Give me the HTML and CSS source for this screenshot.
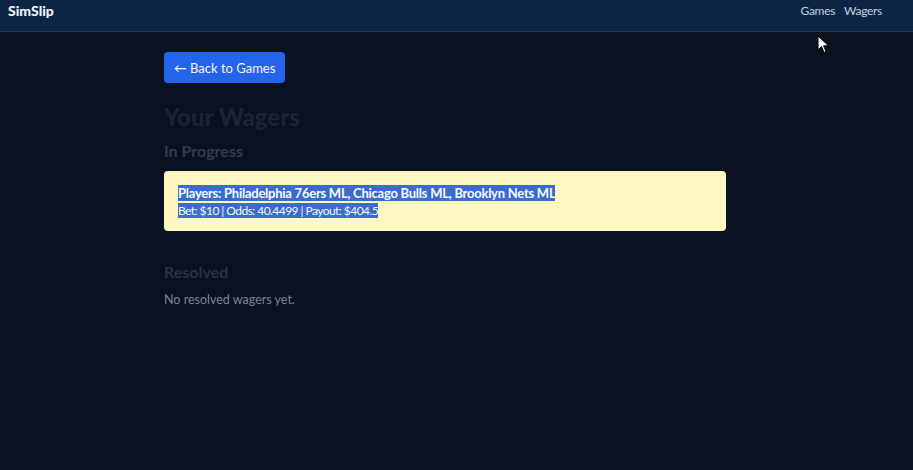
FILE: index.html
```html
<!DOCTYPE html>
<html>
<head>
<meta charset="utf-8">
<link rel="stylesheet" href="styles.css">
</head>
<body>
<header class="nav">
  <div class="brand">SimSlip</div>
  <nav class="links"><a>Games</a><a>Wagers</a></nav>
</header>
<main class="container">
  <button class="back">← Back to Games</button>
  <h1 class="title">Your Wagers</h1>
  <h2 class="section">In Progress</h2>
  <div class="card">
    <div class="line1"><span class="sel">Players: Philadelphia 76ers ML, Chicago Bulls ML, Brooklyn Nets ML</span></div>
    <div class="line2"><span class="sel">Bet: $10 | Odds: 40.4499 | Payout: $404.5</span></div>
  </div>
  <h2 class="section resolved">Resolved</h2>
  <p class="empty">No resolved wagers yet.</p>
</main>
<svg class="cursor" width="14" height="20" viewBox="0 0 14 20"><path d="M1 1 L1 15 L4.5 11.5 L7 17.5 L9 16.6 L6.6 10.8 L11.5 10.8 Z" fill="#fff" stroke="#000" stroke-width="1"/></svg>
</body>
</html>
```
FILE: styles.css
```css
html, body {
  margin: 0;
  padding: 0;
  background: #0a1120;
  font-family: Lato, "Open Sans", sans-serif;
  height: 100%;
}
.nav {
  height: 31px;
  background: #0c2545;
  border-bottom: 1px solid #1c3a5e;
  display: flex;
  align-items: center;
  justify-content: space-between;
  padding: 0 31px 0 8px;
}
.brand {
  color: #eef3f8;
  font-weight: 900;
  font-size: 14px;
  margin-top: -10px;
}
.links {
  display: flex;
  gap: 9px;
  margin-top: -10px;
}
.links a {
  color: #c6d0dc;
  font-size: 12px;
  letter-spacing: -0.3px;
}
.container {
  width: 562px;
  margin-left: 164px;
  padding-top: 20px;
}
.back {
  background: #2563eb;
  color: #f4f7ff;
  border: none;
  border-radius: 4px;
  height: 31px;
  width: 121px;
  font-family: inherit;
  font-size: 13px;
  padding: 0;
}
.title {
  margin: 18px 0 0;
  font-size: 24px;
  font-weight: 900;
  color: #1c2536;
  line-height: 32px;
}
.section {
  margin: 7px 0 0;
  font-size: 16px;
  font-weight: 700;
  color: #323d4e;
  line-height: 22px;
}
.card {
  margin-top: 9px;
  background: #fef8c0;
  border-radius: 4px;
  padding: 13px 14px 11px;
}
.line1 {
  font-size: 13px;
  font-weight: 700;
  line-height: 18px;
  letter-spacing: -0.25px;
}
.line2 {
  font-size: 12px;
  line-height: 18px;
  letter-spacing: -0.55px;
}
.sel {
  background: #3b6cc9;
  color: #f5f8ff;
}
.resolved {
  margin-top: 30px;
  color: #2a3445;
}
.empty {
  margin: 9px 0 0;
  font-size: 12.5px;
  color: #7a8393;
}
.cursor {
  position: absolute;
  left: 817px;
  top: 35px;
}
```
